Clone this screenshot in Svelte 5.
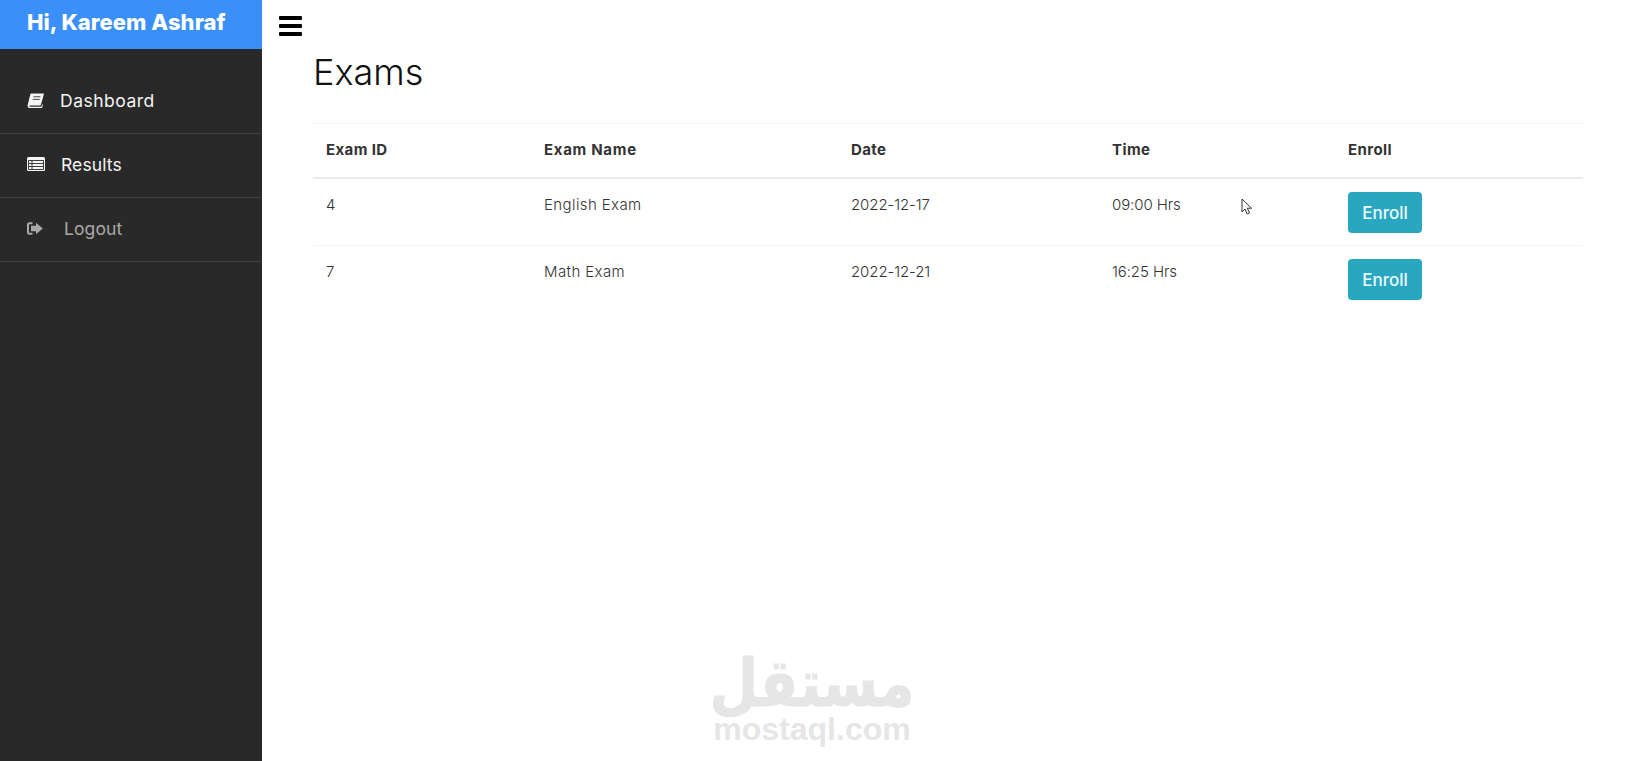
<script>
	const exams = [
		{ id: 4, name: 'English Exam', date: '2022-12-17', time: '09:00 Hrs' },
		{ id: 7, name: 'Math Exam', date: '2022-12-21', time: '16:25 Hrs' }
	];
</script>

<div class="page">
	<aside class="sidebar">
		<div class="brand">Hi, Kareem Ashraf</div>
		<ul class="menu">
			<li>
				<a href="#dashboard" class="dash">
					<svg viewBox="0 0 18 16" width="17" height="15">
						<path fill="#f4f4f4" d="M5 .5h12.3c.5 0 .7.4.6.8l-3 11c-.2.7-.7 1.1-1.4 1.1H3.2c-.6 0-.9.7-.5 1 .2.2.5.3.9.3h11c.4 0 .7-.2.8-.6l.6-2 .9.5-.7 2.500c-.2.8-.8 1.400-1.700 1.400H3C1.200 16 .2 14.700.6 13L3.300 2C3.500 1 4.200.500 5 .5z" />
						<path stroke="#292929" stroke-width="0.900" d="M6.700 4h7.500M6 6.800h7.500" />
					</svg>
					<span>Dashboard</span>
				</a>
			</li>
			<li>
				<a href="#results" class="res">
					<svg viewBox="0 0 18 14" width="18" height="14">
						<rect x="0" y="0" width="18" height="14" rx="1.500" fill="#f4f4f4" />
						<path stroke="#292929" stroke-width="0.900" fill="none" d="M1.500 3.500h15v9h-15zM1.500 6.500h15M1.500 9.500h15M5 3.500v9" />
					</svg>
					<span>Results</span>
				</a>
			</li>
			<li>
				<a href="#logout" class="out">
					<svg viewBox="0 0 16 13" width="16" height="13">
						<path fill="none" stroke="#a9a9a9" stroke-width="2" d="M5.500 1.200H2.500A1.500 1.500 0 0 0 1 2.700v7.600a1.500 1.500 0 0 0 1.500 1.500h3" />
						<path fill="#a9a9a9" d="M4 3.800h5V.8L15.800 6.500 9 12.200v-3H4z" />
					</svg>
					<span>Logout</span>
				</a>
			</li>
		</ul>
	</aside>

	<main class="content">
		<button class="burger" aria-label="Toggle menu"><i></i><i></i><i></i></button>
		<h1>Exams</h1>
		<table>
			<thead>
				<tr>
					<th class="c1">Exam ID</th>
					<th class="c2">Exam Name</th>
					<th class="c3">Date</th>
					<th class="c4">Time</th>
					<th>Enroll</th>
				</tr>
			</thead>
			<tbody>
				{#each exams as exam}
					<tr>
						<td class="first">{exam.id}</td>
						<td>{exam.name}</td>
						<td class="num">{exam.date}</td>
						<td class="num">{exam.time}</td>
						<td><button class="enroll">Enroll</button></td>
					</tr>
				{/each}
			</tbody>
		</table>

		<svg class="cursor" viewBox="0 0 12 18" width="12" height="18">
			<path fill="#fff" stroke="#333" stroke-width="1" d="M1 1v13l3-3 2.200 5 2.300-1-2.200-4.800H10.500z" />
		</svg>

		<div class="mark">
			<div class="mark-ar" dir="rtl">مستقل</div>
			<div class="mark-en">mostaql.com</div>
		</div>
	</main>
</div>

<style>
	:global(body) {
		margin: 0;
		background: #fff;
	}
	.page {
		display: flex;
		height: 761px;
		overflow: hidden;
		font-family: Inter, 'Noto Sans', sans-serif;
	}
	.sidebar {
		width: 262px;
		flex-shrink: 0;
		background: #292929;
	}
	.brand {
		height: 49px;
		box-sizing: border-box;
		padding: 8px 0 0 27px;
		background: #3b8ff9;
		color: #fff;
		font-size: 22px;
		font-weight: 800;
		line-height: 28px;
		letter-spacing: 0.05px;
		white-space: nowrap;
	}
	.menu {
		list-style: none;
		margin: 21px 0 0;
		padding: 0;
	}
	.menu li {
		height: 64px;
		box-sizing: border-box;
		border-bottom: 1px solid #3f3f3f;
	}
	.menu a {
		display: flex;
		align-items: center;
		box-sizing: border-box;
		height: 100%;
		padding: 0 0 3px 27px;
		color: #f4f4f4;
		text-decoration: none;
		font-size: 17.500px;
		letter-spacing: 0.5px;
	}
	.dash span {
		margin-left: 16px;
	}
	.res span {
		margin-left: 16px;
		letter-spacing: 0.1px;
	}
	.menu .out span {
		margin-left: 21px;
		color: #a9a9a9;
		letter-spacing: 0.1px;
	}
	.content {
		position: relative;
		flex: 1;
		padding: 0 42px 0 51px;
	}
	.burger {
		position: absolute;
		left: 17px;
		top: 16px;
		display: flex;
		flex-direction: column;
		gap: 4px;
		width: 23px;
		padding: 0;
		border: 0;
		background: none;
	}
	.burger i {
		display: block;
		height: 4px;
		border-radius: 1px;
		background: #000;
	}
	h1 {
		margin: 0;
		padding-top: 47px;
		color: #111;
		font-size: 36px;
		font-weight: 300;
		line-height: 50px;
	}
	table {
		width: 100%;
		margin-top: 26px;
		border-collapse: collapse;
		table-layout: fixed;
		color: #333;
		font-size: 15px;
	}
	.c1 {
		width: 219px;
	}
	.c2 {
		width: 307px;
	}
	.c3 {
		width: 261px;
	}
	.c4 {
		width: 236px;
	}
	th {
		height: 54px;
		padding: 0 12px 2px;
		box-sizing: border-box;
		border-top: 1px solid #f4f4f4;
		border-bottom: 2px solid #e9ecef;
		text-align: left;
		font-weight: 700;
		letter-spacing: 0.4px;
	}
	th.c1,
	td.first {
		padding-left: 13px;
	}
	th.c2 {
		letter-spacing: 0.7px;
	}
	td {
		padding: 14px 12px 11px;
		border-bottom: 1px solid #f4f4f4;
		vertical-align: top;
		font-weight: 300;
		line-height: 24px;
		letter-spacing: 0.4px;
	}
	td.num {
		letter-spacing: -0.1px;
	}
	td:last-child {
		padding-top: 13px;
		padding-bottom: 12px;
	}
	tr:last-child td {
		border-bottom: 0;
	}
	.enroll {
		display: block;
		width: 74px;
		height: 41px;
		padding: 2px 0 0;
		border: 0;
		border-radius: 4px;
		background: #2aa7c0;
		color: #eafcff;
		font: 500 17px Inter, sans-serif;
	}
	.cursor {
		position: absolute;
		left: 979px;
		top: 198px;
	}
	.mark {
		position: absolute;
		left: 445px;
		top: 659px;
		width: 210px;
		text-align: center;
		color: #e6e6e6;
		font-weight: 700;
	}
	.mark-ar {
		font-family: 'DejaVu Sans', sans-serif;
		font-size: 56px;
		line-height: 56px;
		-webkit-text-stroke: 1px #e6e6e6;
		transform: scaleY(1.180);
		transform-origin: 50% 88%;
	}
	.mark-en {
		font-family: 'Liberation Sans', sans-serif;
		font-size: 32px;
		line-height: 28px;
	}
</style>
